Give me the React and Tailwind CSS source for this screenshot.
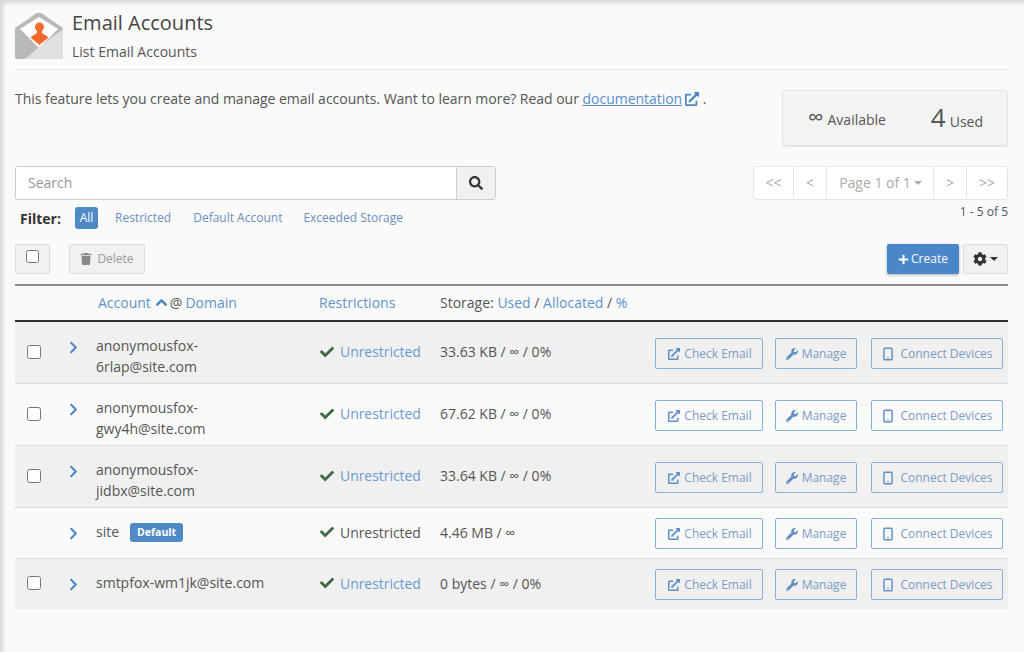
import React from "react";
import { ChevronRight, ChevronUp, Smartphone } from "lucide-react";
import { FaCheck, FaCog, FaPlus, FaSearch, FaTrash, FaWrench, FaExternalLinkAlt } from "react-icons/fa";

const accounts = [
  { check: true, name: ["anonymousfox-", "6rlap@site.com"], storage: "33.63 KB / ∞ / 0%", h: "h-[62px]", shade: true },
  { check: true, name: ["anonymousfox-", "gwy4h@site.com"], storage: "67.62 KB / ∞ / 0%", h: "h-[62px]" },
  { check: true, name: ["anonymousfox-", "jidbx@site.com"], storage: "33.64 KB / ∞ / 0%", h: "h-[62px]", shade: true },
  { check: false, name: ["site"], isDefault: true, storage: "4.46 MB / ∞", h: "h-[51px]" },
  { check: true, name: ["smtpfox-wm1jk@site.com"], storage: "0 bytes / ∞ / 0%", h: "h-[50px]", shade: true, last: true },
];

function Caret() {
  return <span className="inline-block w-0 h-0 border-x-[4px] border-x-transparent border-t-[4px] border-t-current" />;
}

function Logo() {
  return (
    <svg width="48" height="47" viewBox="0 0 48 47" className="shrink-0">
      <path d="M0 16 L21 1.500 Q24 0 27 1.500 L48 16 L48 45 Q48 47 46 47 L2 47 Q0 47 0 45 Z" fill="#b9b9b9" />
      <path d="M5 17 L24 5 L43 17 L24 36 Z" fill="#ffffff" />
      <path d="M48 17 L48 45 Q48 47 46 47 L10 47 L24 35 Z" fill="#e0e0e0" />
      <circle cx="24.500" cy="15" r="4.500" fill="#f26a2e" />
      <path d="M22 18 L27 18 L27 21 L33 25 L33 26 L24.500 33 L16 26 L16 25 L22 21 Z" fill="#f26a2e" />
    </svg>
  );
}

function RowButton({ icon, label, className }) {
  return (
    <button className={`h-[31px] pt-[1px] flex items-center justify-center gap-[4px] border border-[#86b0dc] rounded-[2px] text-[12px] text-[#7a9cc4] bg-transparent ${className}`}>
      {icon}
      {label}
    </button>
  );
}

function Row({ a }) {
  const twoLine = a.name.length > 1;
  return (
    <div className={`${a.h} flex items-center ${a.last ? "" : "border-b border-[#dddddd]"} ${a.shade ? "bg-[#f0f0f0]" : ""}`}>
      <div className="w-[50px] pl-[12px] flex mb-[2px]">
        {a.check && <input type="checkbox" className="w-[14px] h-[14px] m-0" />}
      </div>
      <div className={`w-[31px] flex ${twoLine ? "mb-[10px]" : ""}`}>
        <ChevronRight size={19} strokeWidth={2.5} className="text-[#4a86c5] ml-[-1px]" />
      </div>
      <div className={`w-[223px] text-[14px] leading-[21px] text-[#555555] ${twoLine ? "mt-[6px]" : "mb-[3px]"}`}>
        {a.name.map(n => <div key={n}>{n}{a.isDefault && (
          <span className="inline-block ml-[11px] px-[7px] h-[19px] leading-[19px] align-[1px] rounded-[3px] bg-[#4f8ac7] text-white text-[10.500px] font-bold">Default</span>
        )}</div>)}
      </div>
      <div className="w-[121px] pl-[1px] mb-[2px] flex items-center gap-[6px] text-[14px] tracking-[-0.05px]">
        <FaCheck size={14} className="text-[#3d6b42]" />
        <span className={a.check ? "text-[#6a9bd1]" : "text-[#555555]"}>Unrestricted</span>
      </div>
      <div className="w-[215px] mb-[2px] text-[14px] text-[#555555]">{a.storage}</div>
      <div className="flex items-center mt-[1px]">
        <RowButton className="w-[108px] pl-[2px]" icon={<FaExternalLinkAlt size={12} className="text-[#5f8fc4]" />} label="Check Email" />
        <RowButton className="w-[82px] ml-[12px]" icon={<FaWrench size={12} className="text-[#5f8fc4]" />} label="Manage" />
        <RowButton className="w-[132px] ml-[14px]" icon={<Smartphone size={14} strokeWidth={2.5} className="text-[#5f8fc4] mr-[1px]" />} label="Connect Devices" />
      </div>
    </div>
  );
}

export default function App() {
  return (
    <div className="relative w-[1024px] h-[652px] overflow-hidden bg-[#fafafa] text-[#555555] font-['Open_Sans',sans-serif] shadow-[inset_3px_3px_4px_rgba(0,0,0,0.14)]">
      <div className="pl-[15px] pr-[16px] pt-[12px]">
        {/* Page title */}
        <div className="flex gap-[9px] h-[58px] border-b border-[#e8e8e8]">
          <Logo />
          <div className="mt-[-1px]">
            <div className="text-[20px] leading-[24px] text-[#444444]">Email Accounts</div>
            <div className="text-[14px] leading-[20px] mt-[7px] text-[#555555]">List Email Accounts</div>
          </div>
        </div>

        {/* Intro and stats */}
        <div className="flex justify-between mt-[20px]">
          <div className="mt-[-1px] text-[14px] leading-[20px] tracking-[-0.025px] text-[#555555]">
            This feature lets you create and manage email accounts. Want to learn more? Read our{" "}
            <span className="text-[#5b8fcb] underline">documentation</span>
            <FaExternalLinkAlt size={14} className="inline ml-[3px] mb-[2px] text-[#4a86c5]" /> .
          </div>
          <div className="w-[226px] h-[56px] bg-[#f3f3f3] border border-[#e3e3e3] rounded-[3px] shadow-[0_1px_1px_rgba(0,0,0,0.08)] flex items-center justify-between pl-[25px] pr-[24px] text-[14px]">
            <div className="flex items-baseline gap-[4px]"><span className="text-[22px] leading-[20px]">∞</span>Available</div>
            <div className="flex items-baseline gap-[4px]"><span className="text-[26px] leading-[24px]">4</span>Used</div>
          </div>
        </div>

        {/* Search and paging */}
        <div className="flex justify-between mt-[20px]">
          <div>
            <div className="flex w-[481px] h-[34px] border border-[#cccccc] rounded-[3px] overflow-hidden">
              <div className="flex-1 bg-white pl-[12px] text-[14px] leading-[32px] text-[#999999]">Search</div>
              <div className="w-[39px] bg-[#f0f0f0] border-l border-[#cccccc] flex items-center justify-center text-[#333333]"><FaSearch size={14} /></div>
            </div>
            <div className="flex items-center h-[22px] mt-[7px] pl-[5px] text-[12px]">
              <span className="text-[14px] font-bold text-[#333333] w-[55px]">Filter:</span>
              <span className="h-[22px] w-[23px] rounded-[3px] bg-[#4f8ac7] text-white flex items-center justify-center">All</span>
              <span className="ml-[17px] text-[#6a8fbd]">Restricted</span>
              <span className="ml-[22px] text-[#6a8fbd]">Default Account</span>
              <span className="ml-[21px] text-[#6a8fbd]">Exceeded Storage</span>
            </div>
          </div>
          <div className="flex flex-col items-end">
            <div className="flex h-[34px] pb-[1px] bg-white border border-[#e6e6e6] rounded-[3px] text-[14px] text-[#aaaaaa] divide-x divide-[#e6e6e6]">
              <div className="w-[40px] flex items-center justify-center">&lt;&lt;</div>
              <div className="w-[33px] flex items-center justify-center">&lt;</div>
              <div className="w-[107px] flex items-center justify-center gap-[3px] pl-[1px]">Page 1 of 1<Caret /></div>
              <div className="w-[33px] flex items-center justify-center">&gt;</div>
              <div className="w-[40px] flex items-center justify-center">&gt;&gt;</div>
            </div>
            <div className="text-[12px] leading-[16px] mt-[4px] text-[#555555]">1 - 5 of 5</div>
          </div>
        </div>

        {/* Actions */}
        <div className="flex items-center justify-between mt-[15px] h-[30px]">
          <div className="flex items-start h-[30px]">
            <div className="w-[35px] h-[30px] bg-[#f1f1f1] border border-[#dddddd] rounded-[2px] pl-[10px] pt-[5px] flex items-start">
              <input type="checkbox" className="w-[13px] h-[13px] m-0" />
            </div>
            <button className="ml-[19px] w-[76px] h-[30px] bg-[#f1f1f1] border border-[#dddddd] rounded-[2px] flex items-center justify-center gap-[5px] text-[12px] text-[#999999]">
              <FaTrash size={12} className="text-[#888888]" />Delete
            </button>
          </div>
          <div className="flex items-center gap-[4px]">
            <button className="w-[72px] h-[30px] bg-[#4a87c8] rounded-[2px] shadow-[0_1px_3px_rgba(0,0,0,0.3)] text-white text-[12px] flex items-center justify-center gap-[2px]">
              <FaPlus size={11} />Create
            </button>
            <button className="w-[45px] h-[30px] bg-[#f1f1f1] border border-[#dddddd] rounded-[2px] flex items-center justify-center gap-[3px] text-[#333333]">
              <FaCog size={14} /><Caret />
            </button>
          </div>
        </div>

        {/* Table header */}
        <div className="mt-[10px] h-[38px] pb-[2px] flex items-center border-t-2 border-b-2 border-t-[#8a8a8a] border-b-[#333333] text-[14px]">
          <div className="ml-[83px] w-[221px] flex items-center text-[#5f93cd]">
            Account<ChevronUp size={17} strokeWidth={3.5} className="ml-[2px] text-[#4a86c5]" /><span className="text-[#555555] mr-[3px]">@</span>Domain
          </div>
          <div className="w-[121px] text-[#5f93cd]">Restrictions</div>
          <div className="text-[#555555]">Storage: <span className="text-[#5f93cd]">Used</span> / <span className="text-[#5f93cd]">Allocated</span> / <span className="text-[#5f93cd]">%</span></div>
        </div>

        {accounts.map(a => <Row key={a.name.join("")} a={a} />)}
      </div>
    </div>
  );
}
